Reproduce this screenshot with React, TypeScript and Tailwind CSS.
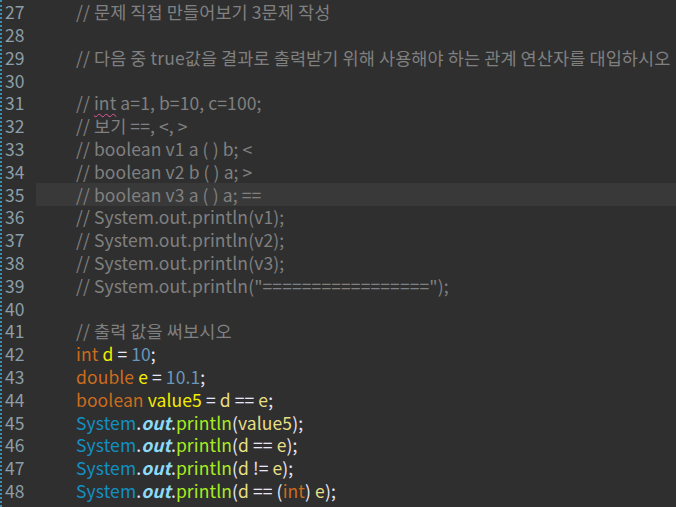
import React from 'react'

type Tok = [string, string]

const C = {
  cm: 'text-[#808080]',
  kw: 'text-[#cc6c1d]',
  decl: 'text-[#f3ec00]',
  vr: 'text-[#e8de84]',
  op: 'text-[#e6e6fa]',
  num: 'text-[#6897bb]',
  cls: 'text-[#1290c3]',
  fld: 'text-[#8ddaf8] italic font-bold',
  mth: 'text-[#a7ec21]',
}

const lines: Tok[][] = [
  [[C.cm, '// 문제 직접 만들어보기 3문제 작성']],
  [],
  [[C.cm, '// 다음 중 true값을 결과로 출력받기 위해 사용해야 하는 관계 연산자를 대입하시오']],
  [],
  [[C.cm, '// '], ['squig', 'int'], [C.cm, ' a=1, b=10, c=100;']],
  [[C.cm, '// 보기 ==, <, >']],
  [[C.cm, '// boolean v1 a ( ) b; <']],
  [[C.cm, '// boolean v2 b ( ) a; >']],
  [[C.cm, '// boolean v3 a ( ) a; ==']],
  [[C.cm, '// System.out.println(v1);']],
  [[C.cm, '// System.out.println(v2);']],
  [[C.cm, '// System.out.println(v3);']],
  [[C.cm, '// System.out.println("=================");']],
  [],
  [[C.cm, '// 출력 값을 써보시오']],
  [[C.kw, 'int'], [C.op, ' '], [C.decl, 'd'], [C.op, ' = '], [C.num, '10'], [C.op, ';']],
  [[C.kw, 'double'], [C.op, ' '], [C.decl, 'e'], [C.op, ' = '], [C.num, '10.1'], [C.op, ';']],
  [[C.kw, 'boolean'], [C.op, ' '], [C.decl, 'value5'], [C.op, ' = '], [C.vr, 'd'], [C.op, ' == '], [C.vr, 'e'], [C.op, ';']],
  [[C.cls, 'System'], [C.op, '.'], [C.fld, 'out'], [C.op, '.'], [C.mth, 'println'], [C.op, '('], [C.vr, 'value5'], [C.op, ');']],
  [[C.cls, 'System'], [C.op, '.'], [C.fld, 'out'], [C.op, '.'], [C.mth, 'println'], [C.op, '('], [C.vr, 'd'], [C.op, ' == '], [C.vr, 'e'], [C.op, ');']],
  [[C.cls, 'System'], [C.op, '.'], [C.fld, 'out'], [C.op, '.'], [C.mth, 'println'], [C.op, '('], [C.vr, 'd'], [C.op, ' != '], [C.vr, 'e'], [C.op, ');']],
  [[C.cls, 'System'], [C.op, '.'], [C.fld, 'out'], [C.op, '.'], [C.mth, 'println'], [C.op, '('], [C.vr, 'd'], [C.op, ' == ('], [C.kw, 'int'], [C.op, ') '], [C.vr, 'e'], [C.op, ');']],
]

export default function App() {
  return (
    <div className="w-[676px] h-[507px] overflow-hidden bg-[#2f2f2f] flex" style={{ fontFamily: '"Noto Sans CJK KR", "Noto Sans", sans-serif' }}>
      <div className="w-[2px] shrink-0 border-l-2 border-dotted border-[#3a8fb0]" />
      <div className="flex-1 flex flex-col pt-[1px]">
        {lines.map((toks, i) => (
          <div key={i} className={`flex h-[22.8px] items-center text-[17.5px] tracking-[0.1px] whitespace-pre ${i === 8 ? 'bg-[linear-gradient(to_right,transparent_34px,#393939_34px)]' : ''}`}>
            <span className="w-[74px] shrink-0 pl-[3px] text-[#8b9ea8]">{27 + i}</span>
            {toks.map(([cls, txt], j) =>
              cls === 'squig' ? (
                <span key={j} className="text-[#808080] underline decoration-wavy decoration-[#e05a9a] decoration-1 underline-offset-[3px]">{txt}</span>
              ) : (
                <span key={j} className={cls}>{txt}</span>
              )
            )}
          </div>
        ))}
      </div>
    </div>
  )
}
